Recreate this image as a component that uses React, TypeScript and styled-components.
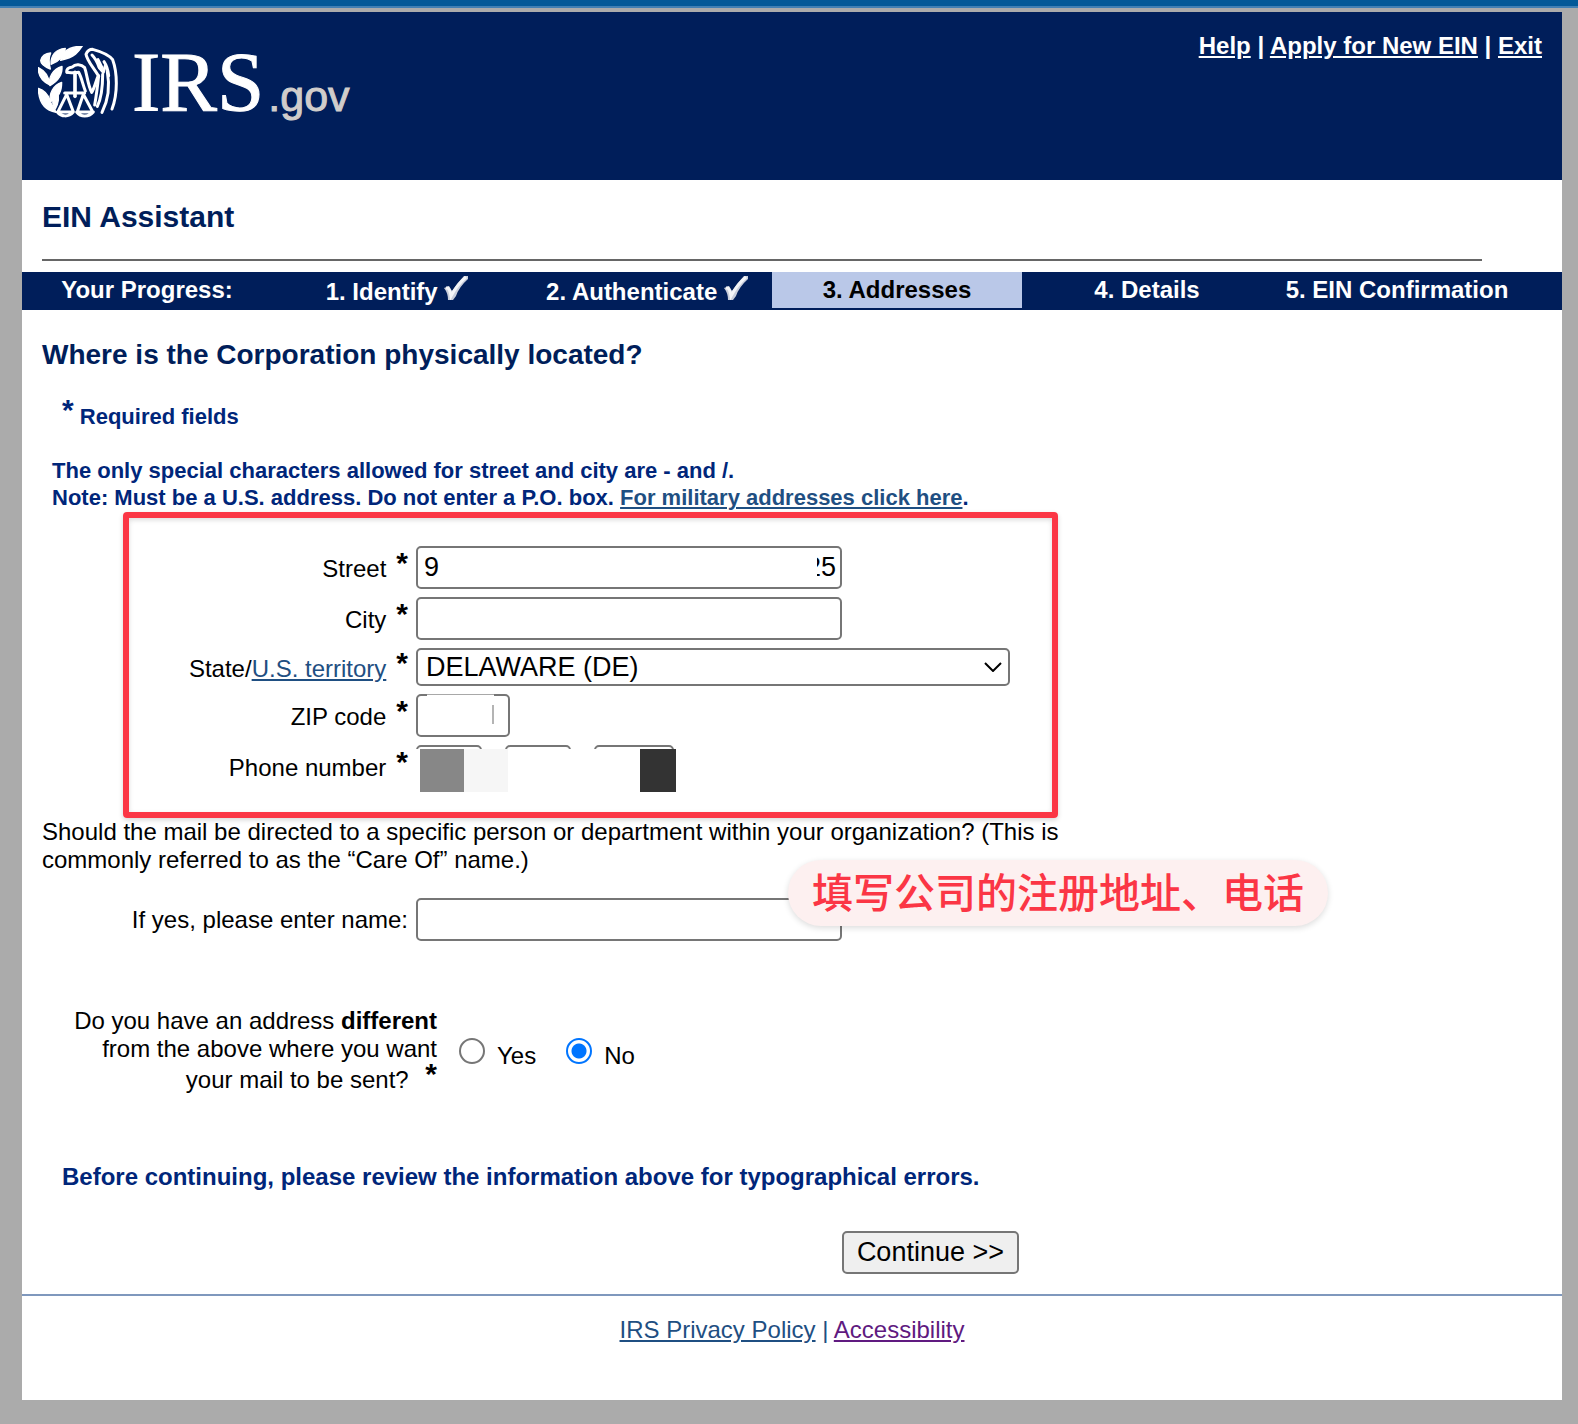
import React, { useState } from "react";
import styled, { createGlobalStyle } from "styled-components";

const navy = "#001e5a";
const blueText = "#00267a";
const linkBlue = "#1f4f82";
const alertRed = "#fb3645";
const fieldBorder = "#767676";

const GlobalStyle = createGlobalStyle`
  *, *::before, *::after { box-sizing: border-box; }
  body {
    margin: 0;
    background: #ababab;
    color: #000;
    font-family: "Liberation Sans", Arial, sans-serif;
    font-size: 24px;
    line-height: 28px;
  }
`;

const TopStrip = styled.div`
  height: 8px;
  background: #045998;
  border-bottom: 2px solid #4280b4;
`;

const Page = styled.div`
  margin: 4px 16px 24px 22px;
  background: #fff;
`;

const Header = styled.header`
  display: flex;
  justify-content: space-between;
  align-items: flex-start;
  min-height: 168px;
  padding: 20px 20px 20px 16px;
  background: ${navy};
  color: #fff;
`;

const Logo = styled.div`
  display: flex;
  align-items: flex-start;
  gap: 14px;
  padding-top: 14px;
`;

const Wordmark = styled.div`
  display: flex;
  align-items: baseline;
  gap: 4px;
  line-height: 72px;
`;

const WordmarkMain = styled.span`
  font-family: "Liberation Serif", "Times New Roman", serif;
  font-size: 85px;
  -webkit-text-stroke: 1px #fff;
`;

const WordmarkSuffix = styled.span`
  font-size: 43px;
  color: #d0cdcb;
  -webkit-text-stroke: 1px #d0cdcb;
`;

const TopLinks = styled.nav`
  font-weight: 700;
`;

const TextLink = styled.a<{ $color: string }>`
  color: ${(p) => p.$color};
  text-decoration: underline;
`;

const Title = styled.h1`
  margin: 0;
  padding: 20px 20px 25px;
  font-size: 30px;
  line-height: 34px;
  color: ${navy};
`;

const TitleRule = styled.hr`
  height: 2px;
  margin: 0 80px 11px 20px;
  border: 0;
  background: #666;
`;

const Progress = styled.ol`
  display: grid;
  grid-template-columns: repeat(6, 1fr);
  margin: 0;
  padding: 0 40px 2px 0;
  list-style: none;
  background: ${navy};
`;

const Step = styled.li<{ $active?: boolean }>`
  height: 36px;
  padding-top: 4px;
  text-align: center;
  font-weight: 700;
  line-height: 27px;
  white-space: nowrap;
  color: ${(p) => (p.$active ? "#000" : "#fff")};
  background: ${(p) => (p.$active ? "#bac8e8" : "transparent")};
`;

const Content = styled.form`
  display: block;
  padding: 29px 20px 20px;
`;

const Question = styled.h2`
  margin: 0 0 28px;
  font-size: 28px;
  line-height: 32px;
  color: ${navy};
`;

const RequiredNote = styled.p`
  margin: 0 0 23px;
  padding-left: 20px;
  font-size: 22px;
  line-height: 34px;
  font-weight: 700;
  color: ${blueText};
`;

const AddressNote = styled.p`
  margin: 0 0 35px;
  padding-left: 10px;
  font-size: 22px;
  line-height: 27px;
  font-weight: 700;
  color: ${blueText};
`;

const Star = styled.span<{ $spaced?: boolean }>`
  margin-left: ${(p) => (p.$spaced ? "10px" : "0")};
  font-size: 30px;
  line-height: 22px;
  font-weight: 700;
  vertical-align: 4px;
`;

const Fields = styled.div`
  position: relative;
  display: flex;
  flex-direction: column;
  gap: 8px;
  margin-bottom: 30px;
`;

const FieldRow = styled.div`
  display: grid;
  grid-template-columns: 366px 1fr;
  column-gap: 8px;
  align-items: center;
`;

const FieldLabel = styled.label`
  text-align: right;
`;

const Control = styled.div<{ $width: number }>`
  position: relative;
  width: 100%;
  max-width: ${(p) => p.$width}px;
`;

const TextInput = styled.input`
  display: block;
  width: 100%;
  height: 43px;
  padding: 0 6px;
  border: 2px solid ${fieldBorder};
  border-radius: 5px;
  background: #fff;
  color: #000;
  font: 27px "Liberation Sans", Arial, sans-serif;
`;

const SelectInput = styled.select`
  display: block;
  width: 100%;
  height: 38px;
  padding: 0 8px;
  border: 2px solid ${fieldBorder};
  border-radius: 5px;
  background: #fff;
  color: #000;
  font: 27px "Liberation Sans", Arial, sans-serif;
  appearance: none;
`;

const Chevron = styled.svg`
  position: absolute;
  top: 14px;
  right: 8px;
  pointer-events: none;
`;

const StreetEnd = styled.span`
  position: absolute;
  top: 6px;
  right: 6px;
  font-size: 27px;
  line-height: 30px;

  &::before {
    content: "";
    position: absolute;
    top: 0;
    bottom: 0;
    left: 0;
    width: 11px;
    background: #fff;
  }
`;

const ZipMask = styled.span`
  position: absolute;
  top: 0;
  left: 11px;
  width: 67px;
  height: 38px;
  border-top: 1px solid #a8a8a8;
  background: #fff;

  &::after {
    content: "";
    position: absolute;
    top: 10px;
    right: 0;
    width: 2px;
    height: 19px;
    background: #b4b4b4;
  }
`;

const PhoneParts = styled.div`
  position: relative;
  display: flex;
  gap: 23px;
`;

const PhoneMask = styled.span`
  position: absolute;
  top: 4px;
  left: 0;
  display: flex;
  height: 43px;
  padding-left: 4px;
  background: #fff;
`;

const MaskBlock = styled.span<{ $width: number; $color: string }>`
  width: ${(p) => p.$width}px;
  background: ${(p) => p.$color};
`;

const RedFrame = styled.div`
  position: absolute;
  top: -34px;
  bottom: -30px;
  left: 81px;
  width: 935px;
  border: 6px solid ${alertRed};
  border-radius: 4px;
  box-shadow: 0 2px 5px rgba(0, 0, 0, 0.16), inset 0 2px 5px rgba(0, 0, 0, 0.14);
  pointer-events: none;
`;

const CareOf = styled.p`
  max-width: 1030px;
  margin: 0 0 24px;
`;

const NameField = styled.div`
  position: relative;
  margin-bottom: 66px;
`;

const Callout = styled.div`
  position: absolute;
  top: -38px;
  left: 746px;
  padding: 0 24px 6px;
  border-radius: 33px;
  background: #fdf0f0;
  box-shadow: 0 2px 6px rgba(0, 0, 0, 0.14);
  color: ${alertRed};
  font: 500 41px/60px "Noto Sans CJK SC", sans-serif;
  white-space: nowrap;
`;

const MailChoice = styled.div`
  display: flex;
  align-items: center;
  gap: 22px;
  margin-bottom: 69px;
  padding-left: 25px;
`;

const MailQuestion = styled.div`
  width: 370px;
  text-align: right;
`;

const RadioGroup = styled.div`
  display: flex;
  gap: 30px;
  padding-top: 6px;
`;

const RadioLabel = styled.label`
  display: flex;
  align-items: baseline;
  gap: 12px;
`;

const Radio = styled.input`
  width: 26px;
  height: 26px;
  margin: 0;
  border: 2px solid ${fieldBorder};
  border-radius: 50%;
  background: #fff;
  appearance: none;

  &:checked {
    border-color: #0075ff;
    background: radial-gradient(circle, #0075ff 7px, #fff 8px);
  }
`;

const Reminder = styled.p`
  margin: 0 0 40px;
  padding-left: 20px;
  font-weight: 700;
  color: ${blueText};
`;

const Actions = styled.div`
  display: flex;
  justify-content: flex-end;
  max-width: 977px;
`;

const ContinueButton = styled.button`
  height: 43px;
  padding: 0 13px;
  border: 2px solid ${fieldBorder};
  border-radius: 5px;
  background: #efefef;
  color: #000;
  font: 27px "Liberation Sans", Arial, sans-serif;
`;

const Footer = styled.footer`
  padding: 20px 20px 56px;
  border-top: 2px solid #7f98bd;
  text-align: center;
  color: ${linkBlue};
`;

function Emblem() {
  return (
    <svg width="80" height="72" viewBox="24 33 240 216" fill="none" aria-hidden="true">
      <g fill="#fff" stroke="#fff" strokeWidth="4" strokeLinejoin="round">
        <path d="M92 76C95 52 116 35 157 33C146 50 136 66 92 76Z" />
        <path d="M63 88C62 62 76 43 106 40C104 58 92 77 63 88Z" />
        <path d="M32 76C36 62 50 55 62 54C56 68 56 84 61 102C42 95 32 88 32 76Z" />
        <path d="M25 98C42 106 57 120 59 150C38 140 24 124 25 98Z" />
        <path d="M96 94C98 118 84 138 60 152C54 128 68 102 96 94Z" />
        <path d="M25 160C42 165 54 178 60 196C64 210 72 218 78 232C46 226 26 202 25 160Z" />
        <path d="M95 142C95 168 88 186 62 200C56 176 70 150 95 142Z" />
        <path d="M82 176C88 184 86 204 76 222C64 206 66 186 82 176Z" />
      </g>
      <g stroke="#fff" strokeWidth="9" strokeLinejoin="round" strokeLinecap="round">
        <path d="M135 112V184" strokeWidth="11" />
        <path d="M111 112C108 103 116 97 127 96C136 86 154 88 164 98C172 120 172 146 185 172C193 160 196 144 203 126" />
        <path d="M111 112C120 114 130 113 146 112C155 128 158 148 166 168" />
        <path d="M104 174H164" />
        <path d="M110 178L84 230M110 178L130 230M82 231C94 246 116 247 130 231Z" />
        <path d="M160 178L142 230M160 178L188 230M140 231C152 247 176 247 190 231Z" />
        <path d="M206 124C190 96 172 80 168 58C172 48 178 43 188 43C214 50 236 58 248 74C262 112 264 176 246 222" />
        <path d="M186 60C196 70 202 82 207 96M204 74L216 98M222 80C230 92 234 104 236 122" />
        <path d="M208 98L220 112L226 92M206 122C202 160 198 188 194 210" />
        <path d="M218 118C218 156 214 190 202 214" />
        <path d="M232 110C240 152 234 196 216 232" />
      </g>
    </svg>
  );
}

function CheckMark() {
  return (
    <svg width="24" height="24" viewBox="0 0 24 24" role="img" aria-label="completed">
      <path d="M0 12L5 10L8 15Q13 7 20 0H24V3Q15 11 12 20L9 24H4Q4 17 0 12Z" fill="#c9cedb" />
      <path d="M2 12L4 12Q6 14 7 20Q13 9 22 1" stroke="#f4f5f8" strokeWidth="3" fill="none" />
    </svg>
  );
}

const steps = [
  { text: "Your Progress:" },
  { text: "1. Identify", done: true },
  { text: "2. Authenticate", done: true },
  { text: "3. Addresses", active: true },
  { text: "4. Details" },
  { text: "5. EIN Confirmation" },
];

const states = ["CALIFORNIA (CA)", "DELAWARE (DE)", "NEW YORK (NY)", "TEXAS (TX)", "WYOMING (WY)"];

export default function App() {
  const [street, setStreet] = useState("9");
  const [state, setState] = useState("DELAWARE (DE)");
  const [different, setDifferent] = useState("no");

  return (
    <>
      <GlobalStyle />
      <TopStrip />
      <Page>
        <Header>
          <Logo>
            <Emblem />
            <Wordmark>
              <WordmarkMain>IRS</WordmarkMain>
              <WordmarkSuffix>.gov</WordmarkSuffix>
            </Wordmark>
          </Logo>
          <TopLinks>
            <TextLink href="#help" $color="#fff">Help</TextLink> |{" "}
            <TextLink href="#apply" $color="#fff">Apply for New EIN</TextLink> |{" "}
            <TextLink href="#exit" $color="#fff">Exit</TextLink>
          </TopLinks>
        </Header>

        <Title>EIN Assistant</Title>
        <TitleRule />
        <Progress>
          {steps.map((step) => (
            <Step key={step.text} $active={step.active}>
              {step.text}
              {step.done && <> <CheckMark /></>}
            </Step>
          ))}
        </Progress>

        <Content onSubmit={(e) => e.preventDefault()}>
          <Question>Where is the Corporation physically located?</Question>
          <RequiredNote><Star>*</Star> Required fields</RequiredNote>
          <AddressNote>
            The only special characters allowed for street and city are - and /.
            <br />
            Note: Must be a U.S. address. Do not enter a P.O. box.{" "}
            <TextLink href="#military" $color={linkBlue}>For military addresses click here</TextLink>.
          </AddressNote>

          <Fields>
            <FieldRow>
              <FieldLabel htmlFor="street">Street<Star $spaced>*</Star></FieldLabel>
              <Control $width={426}>
                <TextInput id="street" value={street} onChange={(e) => setStreet(e.target.value)} />
                <StreetEnd>25</StreetEnd>
              </Control>
            </FieldRow>
            <FieldRow>
              <FieldLabel htmlFor="city">City<Star $spaced>*</Star></FieldLabel>
              <Control $width={426}><TextInput id="city" /></Control>
            </FieldRow>
            <FieldRow>
              <FieldLabel htmlFor="state">
                State/<TextLink href="#territory" $color={linkBlue}>U.S. territory</TextLink>
                <Star $spaced>*</Star>
              </FieldLabel>
              <Control $width={594}>
                <SelectInput id="state" value={state} onChange={(e) => setState(e.target.value)}>
                  {states.map((name) => <option key={name}>{name}</option>)}
                </SelectInput>
                <Chevron width="18" height="10" viewBox="0 0 18 10">
                  <path d="M1 1L9 9L17 1" fill="none" stroke="#000" strokeWidth="2" />
                </Chevron>
              </Control>
            </FieldRow>
            <FieldRow>
              <FieldLabel htmlFor="zip">ZIP code<Star $spaced>*</Star></FieldLabel>
              <Control $width={94}>
                <TextInput id="zip" />
                <ZipMask />
              </Control>
            </FieldRow>
            <FieldRow>
              <FieldLabel htmlFor="phone-area">Phone number<Star $spaced>*</Star></FieldLabel>
              <PhoneParts>
                <Control $width={66}><TextInput id="phone-area" /></Control>
                <Control $width={66}><TextInput aria-label="Phone prefix" /></Control>
                <Control $width={80}><TextInput aria-label="Phone line number" /></Control>
                <PhoneMask>
                  <MaskBlock $width={44} $color="#878787" />
                  <MaskBlock $width={44} $color="#f6f6f6" />
                  <MaskBlock $width={132} $color="#fff" />
                  <MaskBlock $width={36} $color="#333" />
                </PhoneMask>
              </PhoneParts>
            </FieldRow>
            <RedFrame />
          </Fields>

          <CareOf>
            Should the mail be directed to a specific person or department within your organization?
            (This is commonly referred to as the “Care Of” name.)
          </CareOf>
          <NameField>
            <FieldRow>
              <FieldLabel htmlFor="care-of">If yes, please enter name:</FieldLabel>
              <Control $width={426}><TextInput id="care-of" /></Control>
            </FieldRow>
            <Callout>填写公司的注册地址、电话</Callout>
          </NameField>

          <MailChoice role="radiogroup" aria-labelledby="mail-question">
            <MailQuestion id="mail-question">
              Do you have an address <b>different</b> from the above where you want your mail to be
              sent? <Star $spaced>*</Star>
            </MailQuestion>
            <RadioGroup>
              <RadioLabel>
                <Radio type="radio" name="different" checked={different === "yes"} onChange={() => setDifferent("yes")} />
                Yes
              </RadioLabel>
              <RadioLabel>
                <Radio type="radio" name="different" checked={different === "no"} onChange={() => setDifferent("no")} />
                No
              </RadioLabel>
            </RadioGroup>
          </MailChoice>

          <Reminder>
            Before continuing, please review the information above for typographical errors.
          </Reminder>
          <Actions>
            <ContinueButton type="submit">Continue &gt;&gt;</ContinueButton>
          </Actions>
        </Content>

        <Footer>
          <TextLink href="#privacy" $color={linkBlue}>IRS Privacy Policy</TextLink> |{" "}
          <TextLink href="#accessibility" $color="#601a80">Accessibility</TextLink>
        </Footer>
      </Page>
    </>
  );
}
